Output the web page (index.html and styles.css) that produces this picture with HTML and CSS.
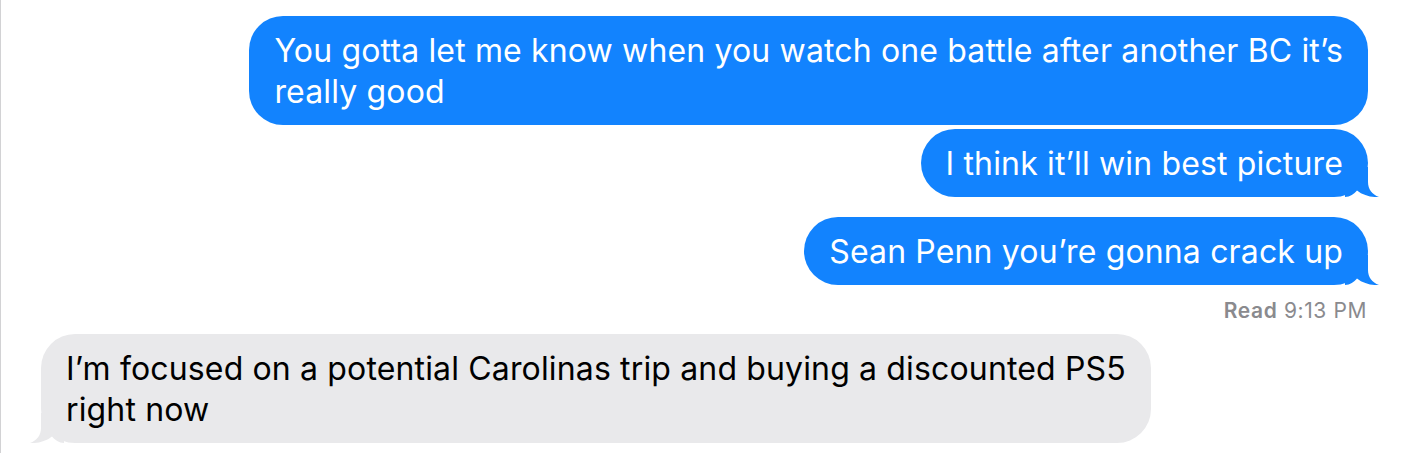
FILE: index.html
```html
<!DOCTYPE html>
<html lang="en">
<head>
<meta charset="utf-8">
<title>Messages</title>
<link rel="stylesheet" href="styles.css">
</head>
<body>
<div class="thread">
  <div class="bubble out first">You gotta let me know when you watch one battle after another BC it’s<br>really good</div>
  <div class="bubble out tailed">I think it’ll win best picture<svg class="tail" viewBox="0 0 34 30" width="34" height="30"><path d="M23 0 L23 15 C23 22 27 27.5 34 30 C27 30.5 18 28.5 12 23.5 C9 27 5 30 0 30 L0 0 Z"/></svg></div>
  <div class="bubble out tailed gap">Sean Penn you’re gonna crack up<svg class="tail" viewBox="0 0 34 30" width="34" height="30"><path d="M23 0 L23 15 C23 22 27 27.5 34 30 C27 30.5 18 28.5 12 23.5 C9 27 5 30 0 30 L0 0 Z"/></svg></div>
  <div class="receipt"><span class="receipt-label">Read</span> 9:13 PM</div>
  <div class="bubble in tailed">I’m focused on a potential Carolinas trip and buying a discounted PS5<br>right now<svg class="tail" viewBox="0 0 34 30" width="34" height="30"><path d="M23 0 L23 15 C23 22 27 27.5 34 30 C27 30.5 18 28.5 12 23.5 C9 27 5 30 0 30 L0 0 Z"/></svg></div>
</div>
</body>
</html>
```
FILE: styles.css
```css
* { box-sizing: border-box; }
html, body { margin: 0; padding: 0; background: #ffffff; }
body {
  font-family: Inter, "Noto Sans", "Liberation Sans", sans-serif;
  width: 1408px;
  height: 453px;
  overflow: hidden;
}
.thread {
  height: 453px;
  border-left: 1px solid #d2d2d4;
  padding: 16px 40px 0 40px;
  display: flex;
  flex-direction: column;
  align-items: flex-end;
}
.bubble {
  position: relative;
  font-size: 32px;
  line-height: 41px;
  letter-spacing: 0.15px;
  padding: 13.5px 25px;
  border-radius: 34px;
  white-space: nowrap;
}
.bubble.out { background: #1283fe; color: #ffffff; }
.bubble.out .tail { fill: #1283fe; }
.bubble.in {
  background: #e9e9eb;
  color: #000000;
  align-self: flex-start;
  margin-top: 11px;
}
.bubble.in .tail { fill: #e9e9eb; }
.bubble.first { margin-bottom: 4px; }
.bubble.gap { margin-top: 20px; }
.tail {
  position: absolute;
  bottom: 0;
  display: block;
}
.bubble.out .tail { right: -11px; }
.bubble.in .tail { left: -11px; transform: scaleX(-1); }
.receipt {
  margin-top: 14px;
  font-size: 21px;
  line-height: 24px;
  letter-spacing: 0.6px;
  color: #8a8a8e;
  margin-right: 1px;
}
.receipt-label { font-weight: 600; }
```
